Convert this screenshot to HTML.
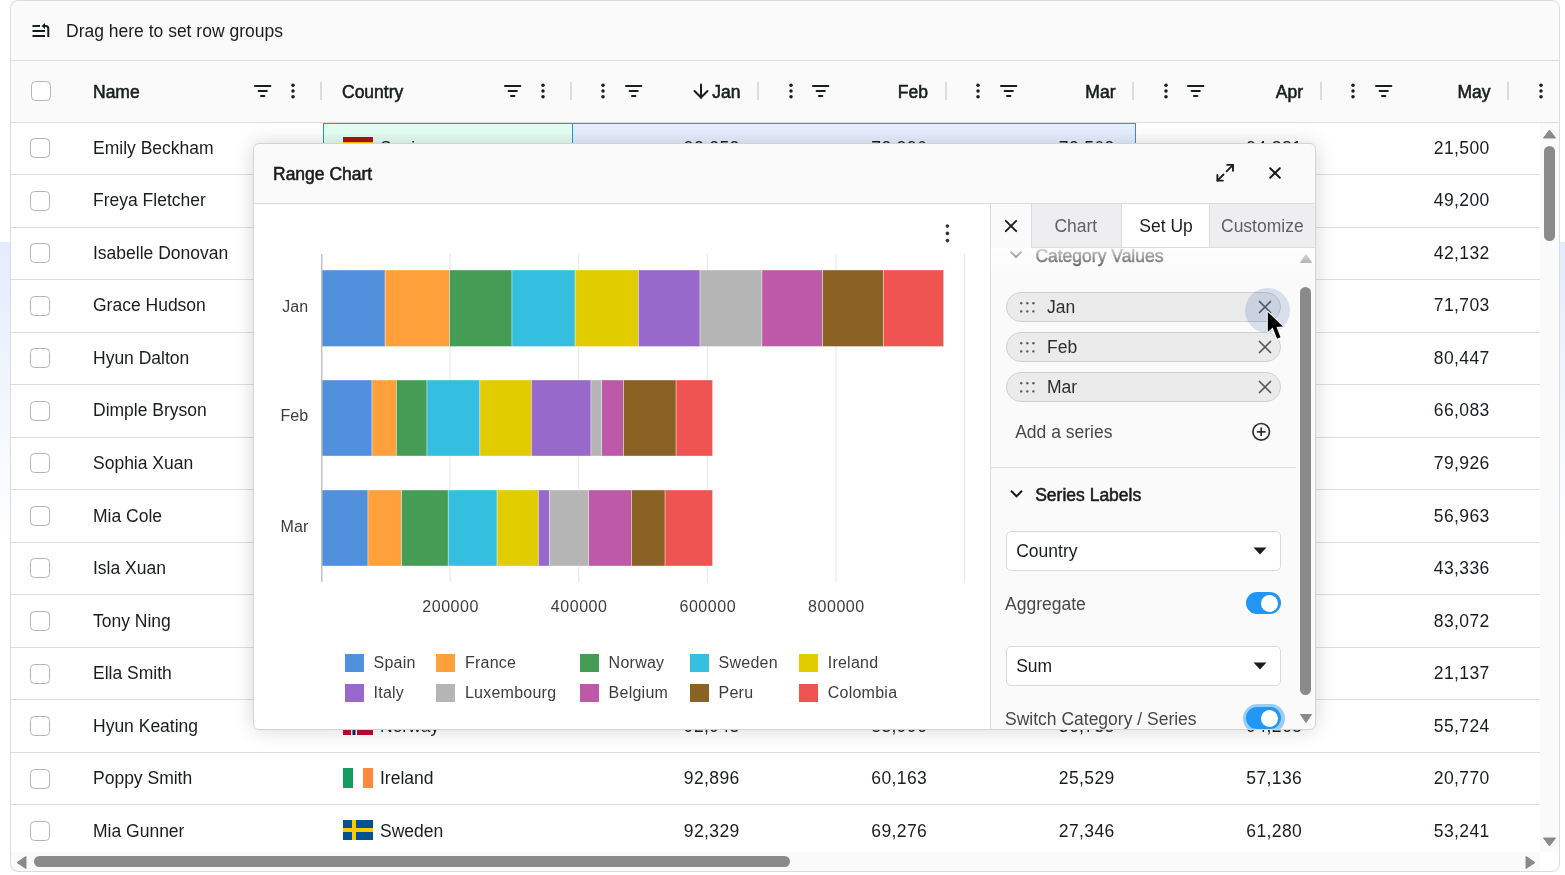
<!DOCTYPE html><html><head><meta charset="utf-8"><style>html,body{margin:0;padding:0;background:#fff;overflow:hidden}body{width:1565px;height:875px;position:relative;font-family:"Liberation Sans",sans-serif}#root{position:absolute;left:0;top:0;width:1565px;height:875px;will-change:transform}</style></head><body><div id="root">
<div style="position:absolute;left:0px;top:242px;width:1565px;height:300px;background:linear-gradient(#e3ecfc, #ffffff)"></div>
<div style="position:absolute;left:10px;top:0px;width:1550px;height:872px;border-radius:8px;overflow:hidden;background:#fff">
<div style="position:absolute;left:-10px;top:0;width:1565px;height:875px">
<div style="position:absolute;left:10px;top:0px;width:1550px;height:122px;background:#fafafa"></div>
<div style="position:absolute;left:10px;top:60px;width:1550px;height:1px;background:#dcdde0"></div>
<div style="position:absolute;left:10px;top:122px;width:1550px;height:1px;background:#dcdde0"></div>
<svg style="position:absolute;left:31px;top:22px;" width="20" height="17" viewBox="0 0 20 17"><g fill="none" stroke="#181d1f" stroke-width="2"><path d="M1.5 4H9"/><path d="M1.5 9H14"/><path d="M1.5 14H14"/></g><path d="M17.3 15V6.5Q17.3 4 14.8 4H12.5" fill="none" stroke="#181d1f" stroke-width="2"/><path d="M10.5 4L14 1V7Z" fill="#181d1f"/></svg>
<div style="position:absolute;left:66px;top:22.69px;font-size:17.5px;line-height:17.5px;font-weight:400;color:#181d1f;white-space:nowrap;letter-spacing:0px;">Drag here to set row groups</div>
<div style="position:absolute;left:30.5px;top:81px;width:20px;height:20px;box-sizing:border-box;border:1.3px solid #b3b5b7;border-radius:4.5px;background:#fff"></div>
<div style="position:absolute;left:93px;top:83.79px;font-size:17.5px;line-height:17.5px;font-weight:400;color:#181d1f;white-space:nowrap;letter-spacing:0px;-webkit-text-stroke:0.55px #181d1f;">Name</div>
<svg style="position:absolute;left:254.4px;top:85px;" width="18" height="13" viewBox="0 0 18 13"><g fill="#181d1f"><rect x="0" y="0" width="17.4" height="2" rx="1"/><rect x="3.6" y="5" width="10.2" height="2" rx="1"/><rect x="6" y="10" width="5.4" height="2" rx="1"/></g></svg>
<svg style="position:absolute;left:290px;top:82px;" width="6" height="18" viewBox="0 0 6 18"><g fill="#181d1f"><circle cx="3" cy="3.2" r="1.75"/><circle cx="3" cy="9" r="1.75"/><circle cx="3" cy="14.8" r="1.75"/></g></svg>
<div style="position:absolute;left:320px;top:82px;width:2px;height:18px;background:#dcdcdc"></div>
<div style="position:absolute;left:342px;top:83.79px;font-size:17.5px;line-height:17.5px;font-weight:400;color:#181d1f;white-space:nowrap;letter-spacing:0px;-webkit-text-stroke:0.55px #181d1f;">Country</div>
<svg style="position:absolute;left:504.3px;top:85px;" width="18" height="13" viewBox="0 0 18 13"><g fill="#181d1f"><rect x="0" y="0" width="17.4" height="2" rx="1"/><rect x="3.6" y="5" width="10.2" height="2" rx="1"/><rect x="6" y="10" width="5.4" height="2" rx="1"/></g></svg>
<svg style="position:absolute;left:540px;top:82px;" width="6" height="18" viewBox="0 0 6 18"><g fill="#181d1f"><circle cx="3" cy="3.2" r="1.75"/><circle cx="3" cy="9" r="1.75"/><circle cx="3" cy="14.8" r="1.75"/></g></svg>
<div style="position:absolute;left:570px;top:82px;width:2px;height:18px;background:#dcdcdc"></div>
<svg style="position:absolute;left:600.0px;top:82px;" width="6" height="18" viewBox="0 0 6 18"><g fill="#181d1f"><circle cx="3" cy="3.2" r="1.75"/><circle cx="3" cy="9" r="1.75"/><circle cx="3" cy="14.8" r="1.75"/></g></svg>
<svg style="position:absolute;left:624.5px;top:85px;" width="18" height="13" viewBox="0 0 18 13"><g fill="#181d1f"><rect x="0" y="0" width="17.4" height="2" rx="1"/><rect x="3.6" y="5" width="10.2" height="2" rx="1"/><rect x="6" y="10" width="5.4" height="2" rx="1"/></g></svg>
<div style="position:absolute;left:140.5px;width:600px;text-align:right;top:83.79px;font-size:17.5px;line-height:17.5px;font-weight:400;color:#181d1f;white-space:nowrap;letter-spacing:0px;-webkit-text-stroke:0.55px #181d1f;">Jan</div>
<div style="position:absolute;left:757px;top:82px;width:2px;height:18px;background:#dcdcdc"></div>
<svg style="position:absolute;left:787.5px;top:82px;" width="6" height="18" viewBox="0 0 6 18"><g fill="#181d1f"><circle cx="3" cy="3.2" r="1.75"/><circle cx="3" cy="9" r="1.75"/><circle cx="3" cy="14.8" r="1.75"/></g></svg>
<svg style="position:absolute;left:812px;top:85px;" width="18" height="13" viewBox="0 0 18 13"><g fill="#181d1f"><rect x="0" y="0" width="17.4" height="2" rx="1"/><rect x="3.6" y="5" width="10.2" height="2" rx="1"/><rect x="6" y="10" width="5.4" height="2" rx="1"/></g></svg>
<div style="position:absolute;left:328.0px;width:600px;text-align:right;top:83.79px;font-size:17.5px;line-height:17.5px;font-weight:400;color:#181d1f;white-space:nowrap;letter-spacing:0px;-webkit-text-stroke:0.55px #181d1f;">Feb</div>
<div style="position:absolute;left:944.5px;top:82px;width:2px;height:18px;background:#dcdcdc"></div>
<svg style="position:absolute;left:975.0px;top:82px;" width="6" height="18" viewBox="0 0 6 18"><g fill="#181d1f"><circle cx="3" cy="3.2" r="1.75"/><circle cx="3" cy="9" r="1.75"/><circle cx="3" cy="14.8" r="1.75"/></g></svg>
<svg style="position:absolute;left:999.5px;top:85px;" width="18" height="13" viewBox="0 0 18 13"><g fill="#181d1f"><rect x="0" y="0" width="17.4" height="2" rx="1"/><rect x="3.6" y="5" width="10.2" height="2" rx="1"/><rect x="6" y="10" width="5.4" height="2" rx="1"/></g></svg>
<div style="position:absolute;left:515.5px;width:600px;text-align:right;top:83.79px;font-size:17.5px;line-height:17.5px;font-weight:400;color:#181d1f;white-space:nowrap;letter-spacing:0px;-webkit-text-stroke:0.55px #181d1f;">Mar</div>
<div style="position:absolute;left:1132px;top:82px;width:2px;height:18px;background:#dcdcdc"></div>
<svg style="position:absolute;left:1162.5px;top:82px;" width="6" height="18" viewBox="0 0 6 18"><g fill="#181d1f"><circle cx="3" cy="3.2" r="1.75"/><circle cx="3" cy="9" r="1.75"/><circle cx="3" cy="14.8" r="1.75"/></g></svg>
<svg style="position:absolute;left:1187px;top:85px;" width="18" height="13" viewBox="0 0 18 13"><g fill="#181d1f"><rect x="0" y="0" width="17.4" height="2" rx="1"/><rect x="3.6" y="5" width="10.2" height="2" rx="1"/><rect x="6" y="10" width="5.4" height="2" rx="1"/></g></svg>
<div style="position:absolute;left:703.0px;width:600px;text-align:right;top:83.79px;font-size:17.5px;line-height:17.5px;font-weight:400;color:#181d1f;white-space:nowrap;letter-spacing:0px;-webkit-text-stroke:0.55px #181d1f;">Apr</div>
<div style="position:absolute;left:1319.5px;top:82px;width:2px;height:18px;background:#dcdcdc"></div>
<svg style="position:absolute;left:1350.0px;top:82px;" width="6" height="18" viewBox="0 0 6 18"><g fill="#181d1f"><circle cx="3" cy="3.2" r="1.75"/><circle cx="3" cy="9" r="1.75"/><circle cx="3" cy="14.8" r="1.75"/></g></svg>
<svg style="position:absolute;left:1374.5px;top:85px;" width="18" height="13" viewBox="0 0 18 13"><g fill="#181d1f"><rect x="0" y="0" width="17.4" height="2" rx="1"/><rect x="3.6" y="5" width="10.2" height="2" rx="1"/><rect x="6" y="10" width="5.4" height="2" rx="1"/></g></svg>
<div style="position:absolute;left:890.5px;width:600px;text-align:right;top:83.79px;font-size:17.5px;line-height:17.5px;font-weight:400;color:#181d1f;white-space:nowrap;letter-spacing:0px;-webkit-text-stroke:0.55px #181d1f;">May</div>
<div style="position:absolute;left:1507px;top:82px;width:2px;height:18px;background:#dcdcdc"></div>
<svg style="position:absolute;left:692px;top:83px;" width="18" height="17" viewBox="0 0 18 17"><g fill="none" stroke="#181d1f" stroke-width="2" stroke-linecap="round"><path d="M9 1.5V14.5"/><path d="M2.5 8L9 14.5L15.5 8"/></g></svg>
<svg style="position:absolute;left:1538px;top:82px;" width="6" height="18" viewBox="0 0 6 18"><g fill="#181d1f"><circle cx="3" cy="3.2" r="1.75"/><circle cx="3" cy="9" r="1.75"/><circle cx="3" cy="14.8" r="1.75"/></g></svg>
<div style="position:absolute;left:10px;top:123px;width:1530px;height:729px;overflow:hidden;background:#fff">
<div style="position:absolute;left:-10px;top:-123px;width:1565px;height:875px">
<div style="position:absolute;left:323px;top:123px;width:250px;height:52px;box-sizing:border-box;background:#e6fff3;border-top:1px solid #2196f3;border-left:1px solid #2196f3"></div>
<div style="position:absolute;left:572px;top:123px;width:563.5px;height:52px;box-sizing:border-box;background:#e6eeff;border-top:1px solid #2196f3;border-right:1px solid #2196f3;border-left:1px solid #2196f3"></div>
<div style="position:absolute;left:30px;top:138px;width:20px;height:20px;box-sizing:border-box;border:1.3px solid #b3b5b7;border-radius:4.5px;background:#fff"></div>
<div style="position:absolute;left:93px;top:139.69px;font-size:17.5px;line-height:17.5px;font-weight:400;color:#181d1f;white-space:nowrap;letter-spacing:0px;">Emily Beckham</div>
<svg style="position:absolute;left:343px;top:137.0px;" width="30" height="20" viewBox="0 0 30 20"><rect width="30" height="20" fill="#aa151b"/><rect y="5" width="30" height="10" fill="#ffc400"/></svg>
<div style="position:absolute;left:380px;top:139.69px;font-size:17.5px;line-height:17.5px;font-weight:400;color:#181d1f;white-space:nowrap;letter-spacing:0px;">Spain</div>
<div style="position:absolute;left:139.70000000000005px;width:600px;text-align:right;top:139.69px;font-size:17.5px;line-height:17.5px;font-weight:400;color:#181d1f;white-space:nowrap;letter-spacing:0.4px;">92,252</div>
<div style="position:absolute;left:327.20000000000005px;width:600px;text-align:right;top:139.69px;font-size:17.5px;line-height:17.5px;font-weight:400;color:#181d1f;white-space:nowrap;letter-spacing:0.4px;">73,996</div>
<div style="position:absolute;left:514.7px;width:600px;text-align:right;top:139.69px;font-size:17.5px;line-height:17.5px;font-weight:400;color:#181d1f;white-space:nowrap;letter-spacing:0.4px;">73,503</div>
<div style="position:absolute;left:702.2px;width:600px;text-align:right;top:139.69px;font-size:17.5px;line-height:17.5px;font-weight:400;color:#181d1f;white-space:nowrap;letter-spacing:0.4px;">94,881</div>
<div style="position:absolute;left:889.7px;width:600px;text-align:right;top:139.69px;font-size:17.5px;line-height:17.5px;font-weight:400;color:#181d1f;white-space:nowrap;letter-spacing:0.4px;">21,500</div>
<div style="position:absolute;left:10px;top:174px;width:1530px;height:1px;background:#dddddd"></div>
<div style="position:absolute;left:30px;top:191px;width:20px;height:20px;box-sizing:border-box;border:1.3px solid #b3b5b7;border-radius:4.5px;background:#fff"></div>
<div style="position:absolute;left:93px;top:192.24px;font-size:17.5px;line-height:17.5px;font-weight:400;color:#181d1f;white-space:nowrap;letter-spacing:0px;">Freya Fletcher</div>
<div style="position:absolute;left:889.7px;width:600px;text-align:right;top:192.24px;font-size:17.5px;line-height:17.5px;font-weight:400;color:#181d1f;white-space:nowrap;letter-spacing:0.4px;">49,200</div>
<div style="position:absolute;left:10px;top:227px;width:1530px;height:1px;background:#dddddd"></div>
<div style="position:absolute;left:30px;top:243px;width:20px;height:20px;box-sizing:border-box;border:1.3px solid #b3b5b7;border-radius:4.5px;background:#fff"></div>
<div style="position:absolute;left:93px;top:244.79px;font-size:17.5px;line-height:17.5px;font-weight:400;color:#181d1f;white-space:nowrap;letter-spacing:0px;">Isabelle Donovan</div>
<div style="position:absolute;left:889.7px;width:600px;text-align:right;top:244.79px;font-size:17.5px;line-height:17.5px;font-weight:400;color:#181d1f;white-space:nowrap;letter-spacing:0.4px;">42,132</div>
<div style="position:absolute;left:10px;top:279px;width:1530px;height:1px;background:#dddddd"></div>
<div style="position:absolute;left:30px;top:296px;width:20px;height:20px;box-sizing:border-box;border:1.3px solid #b3b5b7;border-radius:4.5px;background:#fff"></div>
<div style="position:absolute;left:93px;top:297.34px;font-size:17.5px;line-height:17.5px;font-weight:400;color:#181d1f;white-space:nowrap;letter-spacing:0px;">Grace Hudson</div>
<div style="position:absolute;left:889.7px;width:600px;text-align:right;top:297.34px;font-size:17.5px;line-height:17.5px;font-weight:400;color:#181d1f;white-space:nowrap;letter-spacing:0.4px;">71,703</div>
<div style="position:absolute;left:10px;top:332px;width:1530px;height:1px;background:#dddddd"></div>
<div style="position:absolute;left:30px;top:348px;width:20px;height:20px;box-sizing:border-box;border:1.3px solid #b3b5b7;border-radius:4.5px;background:#fff"></div>
<div style="position:absolute;left:93px;top:349.89px;font-size:17.5px;line-height:17.5px;font-weight:400;color:#181d1f;white-space:nowrap;letter-spacing:0px;">Hyun Dalton</div>
<div style="position:absolute;left:889.7px;width:600px;text-align:right;top:349.89px;font-size:17.5px;line-height:17.5px;font-weight:400;color:#181d1f;white-space:nowrap;letter-spacing:0.4px;">80,447</div>
<div style="position:absolute;left:10px;top:384px;width:1530px;height:1px;background:#dddddd"></div>
<div style="position:absolute;left:30px;top:401px;width:20px;height:20px;box-sizing:border-box;border:1.3px solid #b3b5b7;border-radius:4.5px;background:#fff"></div>
<div style="position:absolute;left:93px;top:402.44px;font-size:17.5px;line-height:17.5px;font-weight:400;color:#181d1f;white-space:nowrap;letter-spacing:0px;">Dimple Bryson</div>
<div style="position:absolute;left:889.7px;width:600px;text-align:right;top:402.44px;font-size:17.5px;line-height:17.5px;font-weight:400;color:#181d1f;white-space:nowrap;letter-spacing:0.4px;">66,083</div>
<div style="position:absolute;left:10px;top:437px;width:1530px;height:1px;background:#dddddd"></div>
<div style="position:absolute;left:30px;top:453px;width:20px;height:20px;box-sizing:border-box;border:1.3px solid #b3b5b7;border-radius:4.5px;background:#fff"></div>
<div style="position:absolute;left:93px;top:454.99px;font-size:17.5px;line-height:17.5px;font-weight:400;color:#181d1f;white-space:nowrap;letter-spacing:0px;">Sophia Xuan</div>
<div style="position:absolute;left:889.7px;width:600px;text-align:right;top:454.99px;font-size:17.5px;line-height:17.5px;font-weight:400;color:#181d1f;white-space:nowrap;letter-spacing:0.4px;">79,926</div>
<div style="position:absolute;left:10px;top:489px;width:1530px;height:1px;background:#dddddd"></div>
<div style="position:absolute;left:30px;top:506px;width:20px;height:20px;box-sizing:border-box;border:1.3px solid #b3b5b7;border-radius:4.5px;background:#fff"></div>
<div style="position:absolute;left:93px;top:507.54px;font-size:17.5px;line-height:17.5px;font-weight:400;color:#181d1f;white-space:nowrap;letter-spacing:0px;">Mia Cole</div>
<div style="position:absolute;left:889.7px;width:600px;text-align:right;top:507.54px;font-size:17.5px;line-height:17.5px;font-weight:400;color:#181d1f;white-space:nowrap;letter-spacing:0.4px;">56,963</div>
<div style="position:absolute;left:10px;top:542px;width:1530px;height:1px;background:#dddddd"></div>
<div style="position:absolute;left:30px;top:558px;width:20px;height:20px;box-sizing:border-box;border:1.3px solid #b3b5b7;border-radius:4.5px;background:#fff"></div>
<div style="position:absolute;left:93px;top:560.09px;font-size:17.5px;line-height:17.5px;font-weight:400;color:#181d1f;white-space:nowrap;letter-spacing:0px;">Isla Xuan</div>
<div style="position:absolute;left:889.7px;width:600px;text-align:right;top:560.09px;font-size:17.5px;line-height:17.5px;font-weight:400;color:#181d1f;white-space:nowrap;letter-spacing:0.4px;">43,336</div>
<div style="position:absolute;left:10px;top:594px;width:1530px;height:1px;background:#dddddd"></div>
<div style="position:absolute;left:30px;top:611px;width:20px;height:20px;box-sizing:border-box;border:1.3px solid #b3b5b7;border-radius:4.5px;background:#fff"></div>
<div style="position:absolute;left:93px;top:612.64px;font-size:17.5px;line-height:17.5px;font-weight:400;color:#181d1f;white-space:nowrap;letter-spacing:0px;">Tony Ning</div>
<div style="position:absolute;left:889.7px;width:600px;text-align:right;top:612.64px;font-size:17.5px;line-height:17.5px;font-weight:400;color:#181d1f;white-space:nowrap;letter-spacing:0.4px;">83,072</div>
<div style="position:absolute;left:10px;top:647px;width:1530px;height:1px;background:#dddddd"></div>
<div style="position:absolute;left:30px;top:664px;width:20px;height:20px;box-sizing:border-box;border:1.3px solid #b3b5b7;border-radius:4.5px;background:#fff"></div>
<div style="position:absolute;left:93px;top:665.19px;font-size:17.5px;line-height:17.5px;font-weight:400;color:#181d1f;white-space:nowrap;letter-spacing:0px;">Ella Smith</div>
<div style="position:absolute;left:889.7px;width:600px;text-align:right;top:665.19px;font-size:17.5px;line-height:17.5px;font-weight:400;color:#181d1f;white-space:nowrap;letter-spacing:0.4px;">21,137</div>
<div style="position:absolute;left:10px;top:699px;width:1530px;height:1px;background:#dddddd"></div>
<div style="position:absolute;left:30px;top:716px;width:20px;height:20px;box-sizing:border-box;border:1.3px solid #b3b5b7;border-radius:4.5px;background:#fff"></div>
<div style="position:absolute;left:93px;top:717.74px;font-size:17.5px;line-height:17.5px;font-weight:400;color:#181d1f;white-space:nowrap;letter-spacing:0px;">Hyun Keating</div>
<svg style="position:absolute;left:343px;top:715.05px;" width="30" height="20" viewBox="0 0 30 20"><rect width="30" height="20" fill="#ba0c2f"/><rect x="8" width="6" height="20" fill="#fff"/><rect y="7" width="30" height="6" fill="#fff"/><rect x="9.5" width="3" height="20" fill="#00205b"/><rect y="8.5" width="30" height="3" fill="#00205b"/></svg>
<div style="position:absolute;left:380px;top:717.74px;font-size:17.5px;line-height:17.5px;font-weight:400;color:#181d1f;white-space:nowrap;letter-spacing:0px;">Norway</div>
<div style="position:absolute;left:139.70000000000005px;width:600px;text-align:right;top:717.74px;font-size:17.5px;line-height:17.5px;font-weight:400;color:#181d1f;white-space:nowrap;letter-spacing:0.4px;">92,948</div>
<div style="position:absolute;left:327.20000000000005px;width:600px;text-align:right;top:717.74px;font-size:17.5px;line-height:17.5px;font-weight:400;color:#181d1f;white-space:nowrap;letter-spacing:0.4px;">85,996</div>
<div style="position:absolute;left:514.7px;width:600px;text-align:right;top:717.74px;font-size:17.5px;line-height:17.5px;font-weight:400;color:#181d1f;white-space:nowrap;letter-spacing:0.4px;">36,758</div>
<div style="position:absolute;left:702.2px;width:600px;text-align:right;top:717.74px;font-size:17.5px;line-height:17.5px;font-weight:400;color:#181d1f;white-space:nowrap;letter-spacing:0.4px;">94,268</div>
<div style="position:absolute;left:889.7px;width:600px;text-align:right;top:717.74px;font-size:17.5px;line-height:17.5px;font-weight:400;color:#181d1f;white-space:nowrap;letter-spacing:0.4px;">55,724</div>
<div style="position:absolute;left:10px;top:752px;width:1530px;height:1px;background:#dddddd"></div>
<div style="position:absolute;left:30px;top:769px;width:20px;height:20px;box-sizing:border-box;border:1.3px solid #b3b5b7;border-radius:4.5px;background:#fff"></div>
<div style="position:absolute;left:93px;top:770.29px;font-size:17.5px;line-height:17.5px;font-weight:400;color:#181d1f;white-space:nowrap;letter-spacing:0px;">Poppy Smith</div>
<svg style="position:absolute;left:343px;top:767.5999999999999px;" width="30" height="20" viewBox="0 0 30 20"><rect width="10" height="20" fill="#169b62"/><rect x="20" width="10" height="20" fill="#ff883e"/></svg>
<div style="position:absolute;left:380px;top:770.29px;font-size:17.5px;line-height:17.5px;font-weight:400;color:#181d1f;white-space:nowrap;letter-spacing:0px;">Ireland</div>
<div style="position:absolute;left:139.70000000000005px;width:600px;text-align:right;top:770.29px;font-size:17.5px;line-height:17.5px;font-weight:400;color:#181d1f;white-space:nowrap;letter-spacing:0.4px;">92,896</div>
<div style="position:absolute;left:327.20000000000005px;width:600px;text-align:right;top:770.29px;font-size:17.5px;line-height:17.5px;font-weight:400;color:#181d1f;white-space:nowrap;letter-spacing:0.4px;">60,163</div>
<div style="position:absolute;left:514.7px;width:600px;text-align:right;top:770.29px;font-size:17.5px;line-height:17.5px;font-weight:400;color:#181d1f;white-space:nowrap;letter-spacing:0.4px;">25,529</div>
<div style="position:absolute;left:702.2px;width:600px;text-align:right;top:770.29px;font-size:17.5px;line-height:17.5px;font-weight:400;color:#181d1f;white-space:nowrap;letter-spacing:0.4px;">57,136</div>
<div style="position:absolute;left:889.7px;width:600px;text-align:right;top:770.29px;font-size:17.5px;line-height:17.5px;font-weight:400;color:#181d1f;white-space:nowrap;letter-spacing:0.4px;">20,770</div>
<div style="position:absolute;left:10px;top:804px;width:1530px;height:1px;background:#dddddd"></div>
<div style="position:absolute;left:30px;top:821px;width:20px;height:20px;box-sizing:border-box;border:1.3px solid #b3b5b7;border-radius:4.5px;background:#fff"></div>
<div style="position:absolute;left:93px;top:822.84px;font-size:17.5px;line-height:17.5px;font-weight:400;color:#181d1f;white-space:nowrap;letter-spacing:0px;">Mia Gunner</div>
<svg style="position:absolute;left:343px;top:820.15px;" width="30" height="20" viewBox="0 0 30 20"><rect width="30" height="20" fill="#005293"/><rect x="9" width="4" height="20" fill="#fecb00"/><rect y="8" width="30" height="4" fill="#fecb00"/></svg>
<div style="position:absolute;left:380px;top:822.84px;font-size:17.5px;line-height:17.5px;font-weight:400;color:#181d1f;white-space:nowrap;letter-spacing:0px;">Sweden</div>
<div style="position:absolute;left:139.70000000000005px;width:600px;text-align:right;top:822.84px;font-size:17.5px;line-height:17.5px;font-weight:400;color:#181d1f;white-space:nowrap;letter-spacing:0.4px;">92,329</div>
<div style="position:absolute;left:327.20000000000005px;width:600px;text-align:right;top:822.84px;font-size:17.5px;line-height:17.5px;font-weight:400;color:#181d1f;white-space:nowrap;letter-spacing:0.4px;">69,276</div>
<div style="position:absolute;left:514.7px;width:600px;text-align:right;top:822.84px;font-size:17.5px;line-height:17.5px;font-weight:400;color:#181d1f;white-space:nowrap;letter-spacing:0.4px;">27,346</div>
<div style="position:absolute;left:702.2px;width:600px;text-align:right;top:822.84px;font-size:17.5px;line-height:17.5px;font-weight:400;color:#181d1f;white-space:nowrap;letter-spacing:0.4px;">61,280</div>
<div style="position:absolute;left:889.7px;width:600px;text-align:right;top:822.84px;font-size:17.5px;line-height:17.5px;font-weight:400;color:#181d1f;white-space:nowrap;letter-spacing:0.4px;">53,241</div>
</div></div>
<div style="position:absolute;left:1540px;top:123px;width:19px;height:729px;background:#fafafa"></div>
<svg style="position:absolute;left:1543px;top:129px;" width="13" height="10" viewBox="0 0 13 10"><path d="M6.5 1L12.5 9H0.5Z" fill="#8a8a8a" stroke="#8a8a8a" stroke-linejoin="round" stroke-width="1"/></svg>
<div style="position:absolute;left:1544px;top:145.7px;width:11px;height:95px;background:#8a8a8a;border-radius:6px"></div>
<svg style="position:absolute;left:1543px;top:837px;" width="13" height="10" viewBox="0 0 13 10"><path d="M6.5 9L12.5 1H0.5Z" fill="#8a8a8a" stroke="#8a8a8a" stroke-linejoin="round" stroke-width="1"/></svg>
<div style="position:absolute;left:10px;top:852px;width:1530px;height:20px;background:#fafafa"></div>
<svg style="position:absolute;left:16px;top:856px;" width="11" height="13" viewBox="0 0 11 13"><path d="M1 6.5L10 0.5V12.5Z" fill="#8a8a8a" stroke="#8a8a8a" stroke-linejoin="round" stroke-width="1"/></svg>
<div style="position:absolute;left:34px;top:856px;width:756px;height:11px;background:#8a8a8a;border-radius:6px"></div>
<svg style="position:absolute;left:1525px;top:856px;" width="11" height="13" viewBox="0 0 11 13"><path d="M10 6.5L1 0.5V12.5Z" fill="#8a8a8a" stroke="#8a8a8a" stroke-linejoin="round" stroke-width="1"/></svg>
</div></div>
<div style="position:absolute;left:10px;top:0px;width:1550px;height:872px;box-sizing:border-box;border:1px solid #dcdcdc;border-radius:8px;pointer-events:none"></div>
<div style="position:absolute;left:253px;top:143px;width:1063px;height:587px;box-sizing:border-box;border:1px solid #d4d4d4;border-radius:6px;background:#fafafa;box-shadow:0 0 20px rgba(0,0,0,0.16);overflow:hidden">
<div style="position:absolute;left:-254px;top:-144px;width:1565px;height:875px">
<div style="position:absolute;left:273px;top:165.99px;font-size:17.5px;line-height:17.5px;font-weight:400;color:#181d1f;white-space:nowrap;letter-spacing:0px;-webkit-text-stroke:0.55px #181d1f;">Range Chart</div>
<div style="position:absolute;left:253px;top:203px;width:1063px;height:1px;background:#dcdcdc"></div>
<svg style="position:absolute;left:1214px;top:162px;" width="22" height="22" viewBox="0 0 22 22"><g fill="none" stroke="#181d1f" stroke-width="1.9" stroke-linecap="round" stroke-linejoin="round"><path d="M19 2.9L12.6 9.3"/><path d="M13.2 2.9H19V8.7"/><path d="M3.4 18.6L9.5 12.5"/><path d="M3.4 13V18.6H8.9"/></g></svg>
<svg style="position:absolute;left:1267px;top:165px;" width="16" height="16" viewBox="0 0 16 16"><g stroke="#181d1f" stroke-width="2" stroke-linecap="round"><path d="M3.2 3.2L12.8 12.8"/><path d="M12.8 3.2L3.2 12.8"/></g></svg>
<div style="position:absolute;left:254px;top:204px;width:736px;height:525px;background:#fff"></div>
<svg style="position:absolute;left:0px;top:0px;" width="1565" height="875" viewBox="0 0 1565 875"><rect x="449.6" y="254" width="1" height="328" fill="#e6e6e6"/><rect x="578.2" y="254" width="1" height="328" fill="#e6e6e6"/><rect x="706.8" y="254" width="1" height="328" fill="#e6e6e6"/><rect x="835.4" y="254" width="1" height="328" fill="#e6e6e6"/><rect x="964.0" y="254" width="1" height="328" fill="#e6e6e6"/><rect x="321.5" y="270" width="63.60" height="76.5" fill="#5090dc" stroke="#ffffff" stroke-width="0.6" stroke-opacity="0.6"/><rect x="385.1" y="270" width="64.40" height="76.5" fill="#ffa03a" stroke="#ffffff" stroke-width="0.6" stroke-opacity="0.6"/><rect x="449.5" y="270" width="62.50" height="76.5" fill="#459d55" stroke="#ffffff" stroke-width="0.6" stroke-opacity="0.6"/><rect x="512" y="270" width="63.10" height="76.5" fill="#34bfe1" stroke="#ffffff" stroke-width="0.6" stroke-opacity="0.6"/><rect x="575.1" y="270" width="63.40" height="76.5" fill="#e1cc00" stroke="#ffffff" stroke-width="0.6" stroke-opacity="0.6"/><rect x="638.5" y="270" width="61.50" height="76.5" fill="#9669cb" stroke="#ffffff" stroke-width="0.6" stroke-opacity="0.6"/><rect x="700" y="270" width="62.00" height="76.5" fill="#b5b5b5" stroke="#ffffff" stroke-width="0.6" stroke-opacity="0.6"/><rect x="762" y="270" width="60.60" height="76.5" fill="#bd5aa7" stroke="#ffffff" stroke-width="0.6" stroke-opacity="0.6"/><rect x="822.6" y="270" width="60.80" height="76.5" fill="#8a6224" stroke="#ffffff" stroke-width="0.6" stroke-opacity="0.6"/><rect x="883.4" y="270" width="60.20" height="76.5" fill="#ef5452" stroke="#ffffff" stroke-width="0.6" stroke-opacity="0.6"/><rect x="321.5" y="380" width="50.50" height="76" fill="#5090dc" stroke="#ffffff" stroke-width="0.6" stroke-opacity="0.6"/><rect x="372" y="380" width="24.40" height="76" fill="#ffa03a" stroke="#ffffff" stroke-width="0.6" stroke-opacity="0.6"/><rect x="396.4" y="380" width="30.60" height="76" fill="#459d55" stroke="#ffffff" stroke-width="0.6" stroke-opacity="0.6"/><rect x="427" y="380" width="52.90" height="76" fill="#34bfe1" stroke="#ffffff" stroke-width="0.6" stroke-opacity="0.6"/><rect x="479.9" y="380" width="51.50" height="76" fill="#e1cc00" stroke="#ffffff" stroke-width="0.6" stroke-opacity="0.6"/><rect x="531.4" y="380" width="59.60" height="76" fill="#9669cb" stroke="#ffffff" stroke-width="0.6" stroke-opacity="0.6"/><rect x="591" y="380" width="10.70" height="76" fill="#b5b5b5" stroke="#ffffff" stroke-width="0.6" stroke-opacity="0.6"/><rect x="601.7" y="380" width="21.80" height="76" fill="#bd5aa7" stroke="#ffffff" stroke-width="0.6" stroke-opacity="0.6"/><rect x="623.5" y="380" width="52.60" height="76" fill="#8a6224" stroke="#ffffff" stroke-width="0.6" stroke-opacity="0.6"/><rect x="676.1" y="380" width="36.50" height="76" fill="#ef5452" stroke="#ffffff" stroke-width="0.6" stroke-opacity="0.6"/><rect x="321.5" y="490" width="46.50" height="76" fill="#5090dc" stroke="#ffffff" stroke-width="0.6" stroke-opacity="0.6"/><rect x="368" y="490" width="33.50" height="76" fill="#ffa03a" stroke="#ffffff" stroke-width="0.6" stroke-opacity="0.6"/><rect x="401.5" y="490" width="46.70" height="76" fill="#459d55" stroke="#ffffff" stroke-width="0.6" stroke-opacity="0.6"/><rect x="448.2" y="490" width="48.90" height="76" fill="#34bfe1" stroke="#ffffff" stroke-width="0.6" stroke-opacity="0.6"/><rect x="497.1" y="490" width="41.30" height="76" fill="#e1cc00" stroke="#ffffff" stroke-width="0.6" stroke-opacity="0.6"/><rect x="538.4" y="490" width="11.30" height="76" fill="#9669cb" stroke="#ffffff" stroke-width="0.6" stroke-opacity="0.6"/><rect x="549.7" y="490" width="38.90" height="76" fill="#b5b5b5" stroke="#ffffff" stroke-width="0.6" stroke-opacity="0.6"/><rect x="588.6" y="490" width="42.90" height="76" fill="#bd5aa7" stroke="#ffffff" stroke-width="0.6" stroke-opacity="0.6"/><rect x="631.5" y="490" width="33.60" height="76" fill="#8a6224" stroke="#ffffff" stroke-width="0.6" stroke-opacity="0.6"/><rect x="665.1" y="490" width="47.50" height="76" fill="#ef5452" stroke="#ffffff" stroke-width="0.6" stroke-opacity="0.6"/><rect x="321" y="254" width="1.5" height="328" fill="#c3c3c3"/></svg>
<div style="position:absolute;left:-291.7px;width:600px;text-align:right;top:299.06px;font-size:16px;line-height:16px;font-weight:400;color:#3d3d3d;white-space:nowrap;letter-spacing:0.1px;">Jan</div>
<div style="position:absolute;left:-291.7px;width:600px;text-align:right;top:408.26px;font-size:16px;line-height:16px;font-weight:400;color:#3d3d3d;white-space:nowrap;letter-spacing:0.1px;">Feb</div>
<div style="position:absolute;left:-291.7px;width:600px;text-align:right;top:518.56px;font-size:16px;line-height:16px;font-weight:400;color:#3d3d3d;white-space:nowrap;letter-spacing:0.1px;">Mar</div>
<div style="position:absolute;left:150.60000000000002px;width:600px;text-align:center;top:598.76px;font-size:16px;line-height:16px;font-weight:400;color:#3d3d3d;white-space:nowrap;letter-spacing:0.55px;">200000</div>
<div style="position:absolute;left:279.20000000000005px;width:600px;text-align:center;top:598.76px;font-size:16px;line-height:16px;font-weight:400;color:#3d3d3d;white-space:nowrap;letter-spacing:0.55px;">400000</div>
<div style="position:absolute;left:407.79999999999995px;width:600px;text-align:center;top:598.76px;font-size:16px;line-height:16px;font-weight:400;color:#3d3d3d;white-space:nowrap;letter-spacing:0.55px;">600000</div>
<div style="position:absolute;left:536.4px;width:600px;text-align:center;top:598.76px;font-size:16px;line-height:16px;font-weight:400;color:#3d3d3d;white-space:nowrap;letter-spacing:0.55px;">800000</div>
<div style="position:absolute;left:345px;top:653.8px;width:19px;height:18px;background:#5090dc"></div>
<div style="position:absolute;left:373.5px;top:654.86px;font-size:16px;line-height:16px;font-weight:400;color:#3d3d3d;white-space:nowrap;letter-spacing:0.25px;">Spain</div>
<div style="position:absolute;left:436.4px;top:653.8px;width:19px;height:18px;background:#ffa03a"></div>
<div style="position:absolute;left:464.9px;top:654.86px;font-size:16px;line-height:16px;font-weight:400;color:#3d3d3d;white-space:nowrap;letter-spacing:0.25px;">France</div>
<div style="position:absolute;left:580.1px;top:653.8px;width:19px;height:18px;background:#459d55"></div>
<div style="position:absolute;left:608.6px;top:654.86px;font-size:16px;line-height:16px;font-weight:400;color:#3d3d3d;white-space:nowrap;letter-spacing:0.25px;">Norway</div>
<div style="position:absolute;left:690px;top:653.8px;width:19px;height:18px;background:#34bfe1"></div>
<div style="position:absolute;left:718.5px;top:654.86px;font-size:16px;line-height:16px;font-weight:400;color:#3d3d3d;white-space:nowrap;letter-spacing:0.25px;">Sweden</div>
<div style="position:absolute;left:799.2px;top:653.8px;width:19px;height:18px;background:#e1cc00"></div>
<div style="position:absolute;left:827.7px;top:654.86px;font-size:16px;line-height:16px;font-weight:400;color:#3d3d3d;white-space:nowrap;letter-spacing:0.25px;">Ireland</div>
<div style="position:absolute;left:345px;top:683.7px;width:19px;height:18px;background:#9669cb"></div>
<div style="position:absolute;left:373.5px;top:684.76px;font-size:16px;line-height:16px;font-weight:400;color:#3d3d3d;white-space:nowrap;letter-spacing:0.25px;">Italy</div>
<div style="position:absolute;left:436.4px;top:683.7px;width:19px;height:18px;background:#b5b5b5"></div>
<div style="position:absolute;left:464.9px;top:684.76px;font-size:16px;line-height:16px;font-weight:400;color:#3d3d3d;white-space:nowrap;letter-spacing:0.25px;">Luxembourg</div>
<div style="position:absolute;left:580.1px;top:683.7px;width:19px;height:18px;background:#bd5aa7"></div>
<div style="position:absolute;left:608.6px;top:684.76px;font-size:16px;line-height:16px;font-weight:400;color:#3d3d3d;white-space:nowrap;letter-spacing:0.25px;">Belgium</div>
<div style="position:absolute;left:690px;top:683.7px;width:19px;height:18px;background:#8a6224"></div>
<div style="position:absolute;left:718.5px;top:684.76px;font-size:16px;line-height:16px;font-weight:400;color:#3d3d3d;white-space:nowrap;letter-spacing:0.25px;">Peru</div>
<div style="position:absolute;left:799.2px;top:683.7px;width:19px;height:18px;background:#ef5452"></div>
<div style="position:absolute;left:827.7px;top:684.76px;font-size:16px;line-height:16px;font-weight:400;color:#3d3d3d;white-space:nowrap;letter-spacing:0.25px;">Colombia</div>
<svg style="position:absolute;left:944px;top:222px;" width="7" height="22" viewBox="0 0 7 22"><g fill="#333"><circle cx="3.4" cy="4.1" r="1.8"/><circle cx="3.4" cy="11.4" r="1.8"/><circle cx="3.4" cy="18.6" r="1.8"/></g></svg>
<div style="position:absolute;left:990px;top:204px;width:1px;height:525px;background:#dcdcdc"></div>
<div style="position:absolute;left:1031px;top:204px;width:284px;height:43px;background:#eeeef0"></div>
<div style="position:absolute;left:1122px;top:204px;width:87px;height:43px;background:#ffffff"></div>
<div style="position:absolute;left:1031px;top:204px;width:1px;height:44px;background:#dcdcdc"></div>
<div style="position:absolute;left:1121px;top:204px;width:1px;height:44px;background:#dcdcdc"></div>
<div style="position:absolute;left:1209px;top:204px;width:1px;height:44px;background:#dcdcdc"></div>
<div style="position:absolute;left:1031px;top:247px;width:284px;height:1px;background:#dcdcdc"></div>
<svg style="position:absolute;left:1004px;top:219px;" width="14" height="14" viewBox="0 0 14 14"><g stroke="#181d1f" stroke-width="1.9" stroke-linecap="round"><path d="M1.8 1.8L12.2 12.2"/><path d="M12.2 1.8L1.8 12.2"/></g></svg>
<div style="position:absolute;left:1054.4px;top:217.69px;font-size:17.5px;line-height:17.5px;font-weight:400;color:#5f6264;white-space:nowrap;letter-spacing:0px;">Chart</div>
<div style="position:absolute;left:1139.3px;top:217.69px;font-size:17.5px;line-height:17.5px;font-weight:400;color:#181d1f;white-space:nowrap;letter-spacing:0px;">Set Up</div>
<div style="position:absolute;left:1221px;top:217.69px;font-size:17.5px;line-height:17.5px;font-weight:400;color:#5f6264;white-space:nowrap;letter-spacing:0px;">Customize</div>
<div style="position:absolute;left:991px;top:248px;width:324px;height:481px;overflow:hidden">
<div style="position:absolute;left:-991px;top:-248px;width:1565px;height:875px">
<svg style="position:absolute;left:1009px;top:250px;" width="14" height="9" viewBox="0 0 14 9"><path d="M1.5 1.5L7 7L12.5 1.5" fill="none" stroke="#181d1f" stroke-width="1.8"/></svg>
<div style="position:absolute;left:1035.4px;top:247.69px;font-size:17.5px;line-height:17.5px;font-weight:400;color:#181d1f;white-space:nowrap;letter-spacing:0px;-webkit-text-stroke:0.55px #181d1f;">Category Values</div>
<div style="position:absolute;left:1006px;top:292px;width:275px;height:30px;box-sizing:border-box;background:#ebebeb;border:1px solid #d0d0d0;border-radius:15px"></div>
<svg style="position:absolute;left:1020px;top:302px;" width="16" height="12" viewBox="0 0 16 12"><g fill="#5a5a5a"><circle cx="1.2" cy="1.2" r="1.2"/><circle cx="1.2" cy="9.399999999999999" r="1.2"/><circle cx="7.3" cy="1.2" r="1.2"/><circle cx="7.3" cy="9.399999999999999" r="1.2"/><circle cx="13.399999999999999" cy="1.2" r="1.2"/><circle cx="13.399999999999999" cy="9.399999999999999" r="1.2"/></g></svg>
<div style="position:absolute;left:1047px;top:298.69px;font-size:17.5px;line-height:17.5px;font-weight:400;color:#2a2f31;white-space:nowrap;letter-spacing:0px;">Jan</div>
<svg style="position:absolute;left:1258px;top:300px;" width="14" height="14" viewBox="0 0 14 14"><g stroke="#4f5962" stroke-width="1.7" stroke-linecap="round"><path d="M1.5 1.5L12.5 12.5"/><path d="M12.5 1.5L1.5 12.5"/></g></svg>
<div style="position:absolute;left:1006px;top:332px;width:275px;height:30px;box-sizing:border-box;background:#ebebeb;border:1px solid #d0d0d0;border-radius:15px"></div>
<svg style="position:absolute;left:1020px;top:342px;" width="16" height="12" viewBox="0 0 16 12"><g fill="#5a5a5a"><circle cx="1.2" cy="1.2" r="1.2"/><circle cx="1.2" cy="9.399999999999999" r="1.2"/><circle cx="7.3" cy="1.2" r="1.2"/><circle cx="7.3" cy="9.399999999999999" r="1.2"/><circle cx="13.399999999999999" cy="1.2" r="1.2"/><circle cx="13.399999999999999" cy="9.399999999999999" r="1.2"/></g></svg>
<div style="position:absolute;left:1047px;top:338.69px;font-size:17.5px;line-height:17.5px;font-weight:400;color:#2a2f31;white-space:nowrap;letter-spacing:0px;">Feb</div>
<svg style="position:absolute;left:1258px;top:340px;" width="14" height="14" viewBox="0 0 14 14"><g stroke="#4f5962" stroke-width="1.7" stroke-linecap="round"><path d="M1.5 1.5L12.5 12.5"/><path d="M12.5 1.5L1.5 12.5"/></g></svg>
<div style="position:absolute;left:1006px;top:372px;width:275px;height:30px;box-sizing:border-box;background:#ebebeb;border:1px solid #d0d0d0;border-radius:15px"></div>
<svg style="position:absolute;left:1020px;top:382px;" width="16" height="12" viewBox="0 0 16 12"><g fill="#5a5a5a"><circle cx="1.2" cy="1.2" r="1.2"/><circle cx="1.2" cy="9.399999999999999" r="1.2"/><circle cx="7.3" cy="1.2" r="1.2"/><circle cx="7.3" cy="9.399999999999999" r="1.2"/><circle cx="13.399999999999999" cy="1.2" r="1.2"/><circle cx="13.399999999999999" cy="9.399999999999999" r="1.2"/></g></svg>
<div style="position:absolute;left:1047px;top:378.69px;font-size:17.5px;line-height:17.5px;font-weight:400;color:#2a2f31;white-space:nowrap;letter-spacing:0px;">Mar</div>
<svg style="position:absolute;left:1258px;top:380px;" width="14" height="14" viewBox="0 0 14 14"><g stroke="#4f5962" stroke-width="1.7" stroke-linecap="round"><path d="M1.5 1.5L12.5 12.5"/><path d="M12.5 1.5L1.5 12.5"/></g></svg>
<div style="position:absolute;left:1015.2px;top:424.19px;font-size:17.5px;line-height:17.5px;font-weight:400;color:#44484a;white-space:nowrap;letter-spacing:0px;">Add a series</div>
<svg style="position:absolute;left:1251px;top:421px;" width="21" height="21" viewBox="0 0 21 21"><g fill="none" stroke="#2a2f31" stroke-width="1.7"><circle cx="10.2" cy="10.8" r="8.3"/><path d="M10.2 6.5V15.1M5.9 10.8H14.5"/></g></svg>
<div style="position:absolute;left:991px;top:467px;width:305px;height:1px;background:#dedede"></div>
<svg style="position:absolute;left:1009px;top:489px;" width="15" height="10" viewBox="0 0 15 10"><path d="M2 1.8L7.5 7.3L13 1.8" fill="none" stroke="#181d1f" stroke-width="2"/></svg>
<div style="position:absolute;left:1035.2px;top:486.69px;font-size:17.5px;line-height:17.5px;font-weight:400;color:#181d1f;white-space:nowrap;letter-spacing:0px;-webkit-text-stroke:0.55px #181d1f;">Series Labels</div>
<div style="position:absolute;left:1006px;top:531px;width:275px;height:40px;box-sizing:border-box;background:#fff;border:1px solid #dadada;border-radius:5px"></div>
<div style="position:absolute;left:1016.2px;top:542.69px;font-size:17.5px;line-height:17.5px;font-weight:400;color:#181d1f;white-space:nowrap;letter-spacing:0px;">Country</div>
<svg style="position:absolute;left:1253px;top:547px;" width="14" height="8" viewBox="0 0 14 8"><path d="M0.5 0.5H13.5L7 7.5Z" fill="#181d1f"/></svg>
<div style="position:absolute;left:1006px;top:646px;width:275px;height:40px;box-sizing:border-box;background:#fff;border:1px solid #dadada;border-radius:5px"></div>
<div style="position:absolute;left:1016.2px;top:657.69px;font-size:17.5px;line-height:17.5px;font-weight:400;color:#181d1f;white-space:nowrap;letter-spacing:0px;">Sum</div>
<svg style="position:absolute;left:1253px;top:662px;" width="14" height="8" viewBox="0 0 14 8"><path d="M0.5 0.5H13.5L7 7.5Z" fill="#181d1f"/></svg>
<div style="position:absolute;left:1005px;top:595.59px;font-size:17.5px;line-height:17.5px;font-weight:400;color:#44484a;white-space:nowrap;letter-spacing:0px;">Aggregate</div>
<div style="position:absolute;left:1005px;top:710.99px;font-size:17.5px;line-height:17.5px;font-weight:400;color:#44484a;white-space:nowrap;letter-spacing:0px;">Switch Category / Series</div>
<div style="position:absolute;left:1246px;top:592px;width:35px;height:22px;background:#2196f3;border-radius:11px"></div>
<div style="position:absolute;left:1261px;top:594.5px;width:17px;height:17px;background:#fff;border-radius:50%"></div>
<div style="position:absolute;left:1242.5px;top:703.5px;width:42px;height:29px;box-sizing:border-box;border-radius:15px;background:rgba(33,150,243,0.45)"></div>
<div style="position:absolute;left:1246px;top:707px;width:35px;height:22px;background:#2196f3;border-radius:11px"></div>
<div style="position:absolute;left:1261px;top:709.5px;width:17px;height:17px;background:#fff;border-radius:50%"></div>
<svg style="position:absolute;left:1299px;top:253px;" width="14" height="11" viewBox="0 0 14 11"><path d="M7 1.5L12.5 9.5H1.5Z" fill="#8a8a8a" stroke="#8a8a8a" stroke-linejoin="round"/></svg>
<div style="position:absolute;left:1300px;top:287px;width:11px;height:408px;background:#8a8a8a;border-radius:6px"></div>
<svg style="position:absolute;left:1299px;top:713px;" width="14" height="11" viewBox="0 0 14 11"><path d="M7 9.5L12.5 1.5H1.5Z" fill="#8a8a8a" stroke="#8a8a8a" stroke-linejoin="round"/></svg>
<div style="position:absolute;left:991px;top:248px;width:324px;height:26px;background:linear-gradient(rgba(255,255,255,0.82), rgba(255,255,255,0.35) 60%, rgba(255,255,255,0))"></div>
</div></div>
<div style="position:absolute;left:1245px;top:288px;width:45px;height:45px;border-radius:50%;background:rgba(40,90,170,0.17)"></div>
</div></div>
<svg style="position:absolute;left:1262px;top:307px;" width="26" height="36" viewBox="0 0 26 36"><path d="M5.8 4.9V25L10.6 20.6L15.1 31.8L18.5 30.2L14.5 20L20.9 19.5Z" fill="#000" stroke="#fff" stroke-width="2" stroke-linejoin="round" style="paint-order:stroke"/></svg>
</div></body></html>
